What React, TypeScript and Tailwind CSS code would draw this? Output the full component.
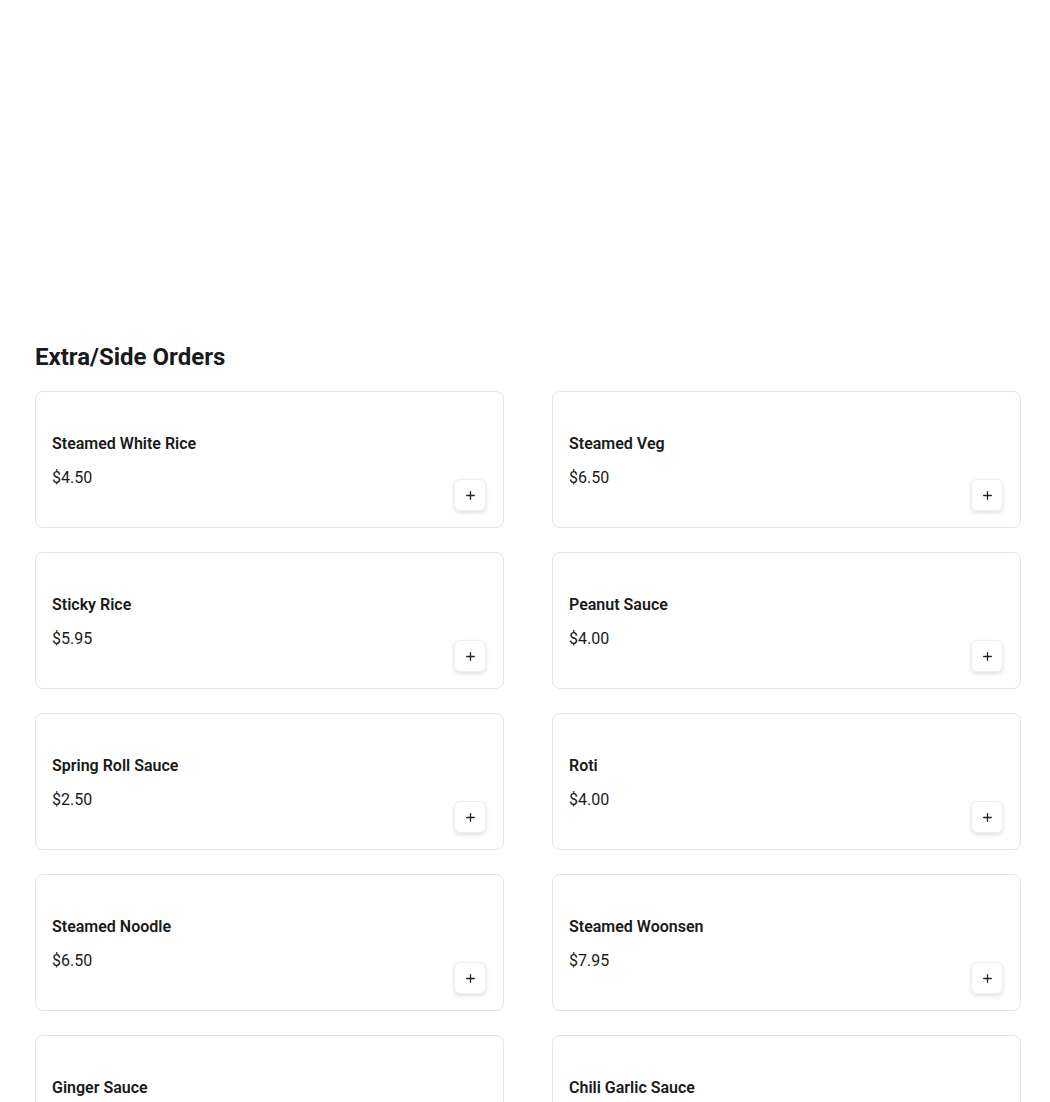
import React from "react";
import { Plus } from "lucide-react";

const items = [
  { name: "Steamed White Rice", price: "$4.50" },
  { name: "Steamed Veg", price: "$6.50" },
  { name: "Sticky Rice", price: "$5.95" },
  { name: "Peanut Sauce", price: "$4.00" },
  { name: "Spring Roll Sauce", price: "$2.50" },
  { name: "Roti", price: "$4.00" },
  { name: "Steamed Noodle", price: "$6.50" },
  { name: "Steamed Woonsen", price: "$7.95" },
  { name: "Ginger Sauce", price: "$3.00" },
  { name: "Chili Garlic Sauce", price: "$3.00" },
];

export default function App() {
  return (
    <div
      className="min-h-[1102px] bg-white text-[#1a1a1a] pt-[341px] pl-[35px]"
      style={{ fontFamily: "Roboto, 'Liberation Sans', sans-serif" }}
    >
      <h2 className="text-[24px] leading-[32px] font-bold mb-[18px]">Extra/Side Orders</h2>
      <div className="grid grid-cols-2 w-[986px] gap-x-12 gap-y-6">
        {items.map((it) => (
          <div
            key={it.name}
            className="h-[137px] border border-[#e5e5e5] rounded-lg p-4 flex justify-between bg-white"
          >
            <div className="pt-[24px]">
              <div className="text-[16px] leading-6 font-semibold">{it.name}</div>
              <div className="text-[16px] leading-6 mt-2.5">{it.price}</div>
            </div>
            <button className="self-end w-8 h-8 mr-[1px] rounded-md border border-[#eeeeee] bg-white shadow-[0_2px_4px_rgba(0,0,0,0.12)] flex items-center justify-center">
              <Plus size={13} strokeWidth={2.4} color="#222" />
            </button>
          </div>
        ))}
      </div>
    </div>
  );
}
